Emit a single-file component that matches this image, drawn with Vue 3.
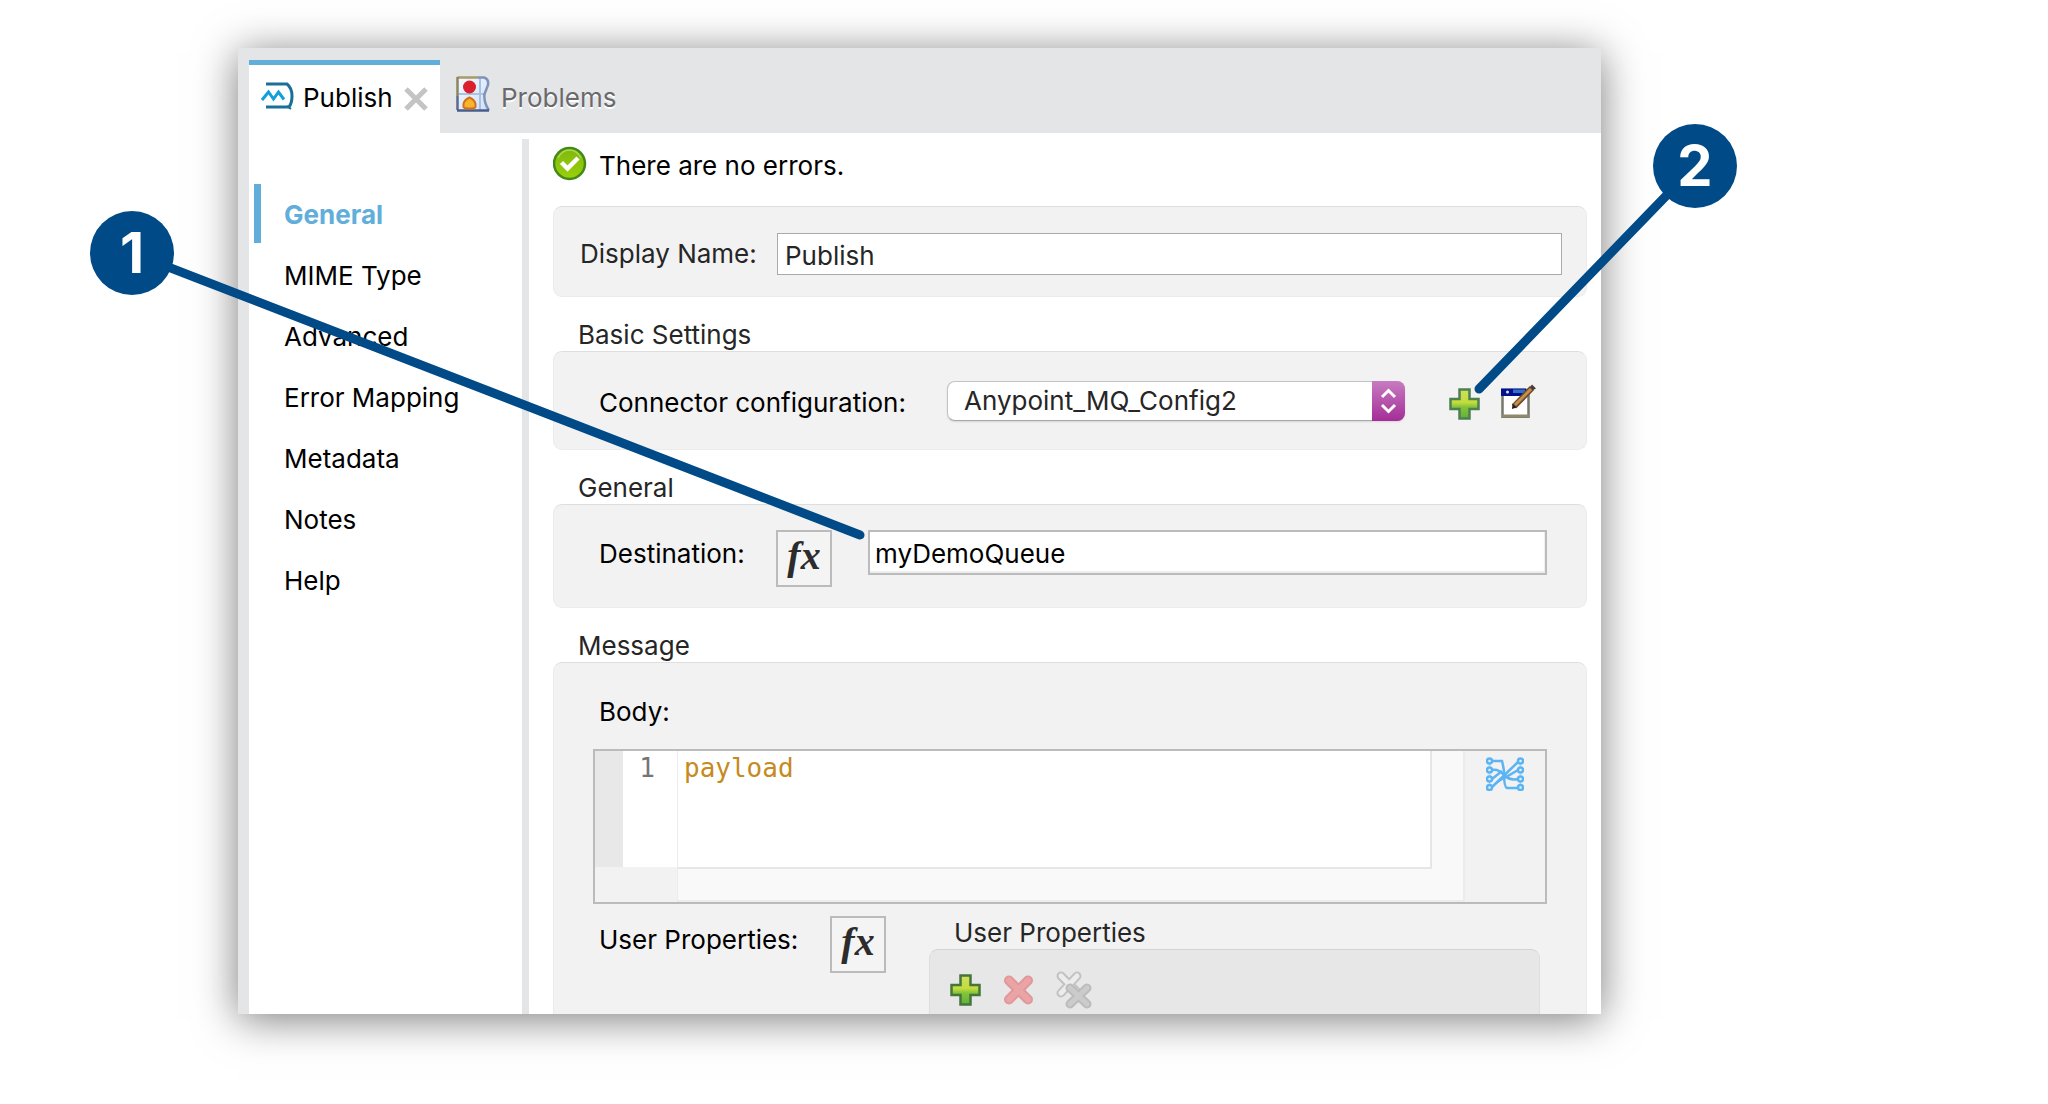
<script setup>
import { ref } from 'vue'

const navItems = ['General', 'MIME Type', 'Advanced', 'Error Mapping', 'Metadata', 'Notes', 'Help']
const activeItem = ref('General')
const displayName = ref('Publish')
const config = ref('Anypoint_MQ_Config2')
const destination = ref('myDemoQueue')
const body = ref('payload')
</script>

<template>
  <main class="page">
    <div class="window">
      <header class="tabs">
        <div class="tab tab-active">
          <svg class="tab-logo" viewBox="0 0 33 28" width="33" height="28" aria-hidden="true">
            <path d="M5 2H26Q31 6 31 14Q31 21 28 25H5" fill="none" stroke="#1a6f97" stroke-width="3" />
            <path d="M26 24L30 27" stroke="#1a6f97" stroke-width="2" />
            <path d="M1 18L7.500 10L12.500 17L17.500 10L23 17.500" fill="none" stroke="#12a0dc" stroke-width="3" />
          </svg>
          <span>Publish</span>
          <button class="icon-button" aria-label="Close tab">
            <svg viewBox="0 0 24 24" width="24" height="24"><path d="M2 2L22 22M22 2L2 22" stroke="#c4c4c4" stroke-width="5" /></svg>
          </button>
        </div>
        <div class="tab tab-idle">
          <svg viewBox="0 0 34 36" width="34" height="36" aria-hidden="true">
            <defs>
              <linearGradient id="sheet" x1="0" y1="0" x2="1" y2="1"><stop offset="0" stop-color="#f4f9ff" /><stop offset="1" stop-color="#cfe0f6" /></linearGradient>
            </defs>
            <path d="M1.500 1.500H29Q33 4 32 9L28 18Q28 26 33 34.500H1.500Z" fill="url(#sheet)" />
            <path d="M24 2V34M2 18H28" stroke="#a9c1e2" stroke-width="2" />
            <path d="M22 1.500H28Q33 3 32 9L28.500 18Q27.500 26 33 34.500" fill="none" stroke="#7f93b8" stroke-width="2.500" />
            <path d="M1.500 1.500H22" stroke="#a89a68" stroke-width="2.500" />
            <path d="M1.500 1V20" stroke="#8d8560" stroke-width="2.500" />
            <path d="M1.500 20V34" stroke="#5d688c" stroke-width="2.500" />
            <path d="M1 34.500H33" stroke="#4a5c8c" stroke-width="2.500" />
            <circle cx="13.500" cy="11" r="6.500" fill="#d9202c" />
            <path d="M7.500 31V28Q8 24 13.500 21.500Q19 24 19.500 28V31Q19 32.500 13.500 32.500Q8 32.500 7.500 31Z" fill="#f8b42a" stroke="#d2701c" stroke-width="2" />
          </svg>
          <span>Problems</span>
        </div>
      </header>

      <div class="body">
        <nav class="sidebar" aria-label="Sections">
          <ul>
            <li v-for="item in navItems" :key="item">
              <a href="#" :class="{ active: item === activeItem }" @click.prevent="activeItem = item">{{ item }}</a>
            </li>
          </ul>
        </nav>

        <form class="form" @submit.prevent>
          <p class="status">
            <svg viewBox="0 0 34 35" width="34" height="35" aria-hidden="true">
              <defs>
                <linearGradient id="ok" x1="0" y1="0" x2="0" y2="1"><stop offset="0" stop-color="#7fb80c" /><stop offset="1" stop-color="#9bd00c" /></linearGradient>
              </defs>
              <circle cx="16.500" cy="17.500" r="15.500" fill="url(#ok)" stroke="#438a14" stroke-width="2.500" />
              <path d="M5 12Q9 4 16.500 4Q24 4 28 12" fill="none" stroke="#a9d653" stroke-width="1.500" />
              <path d="M8.500 16.500L14.500 22.500L25 12" fill="none" stroke="#fff" stroke-width="4.500" />
            </svg>
            <span>There are no errors.</span>
          </p>

          <div class="panel panel-name">
            <label for="display-name">Display Name:</label>
            <input id="display-name" v-model="displayName" type="text" />
          </div>

          <h2>Basic Settings</h2>
          <div class="panel panel-basic">
            <label for="config">Connector configuration:</label>
            <div class="select">
              <select id="config" v-model="config">
                <option>Anypoint_MQ_Config2</option>
              </select>
              <svg viewBox="0 0 33 40" aria-hidden="true">
                <path d="M10 16L16.500 9.500L23 16M10 24L16.500 30.500L23 24" fill="none" stroke="#fff" stroke-width="3" />
              </svg>
            </div>
            <button class="icon-button add" aria-label="Add configuration">
              <svg viewBox="0 0 31 32" width="31" height="32">
                <defs>
                  <linearGradient id="plus" x1="0" y1="0" x2="0" y2="1"><stop offset="0" stop-color="#cfe05e" /><stop offset="0.450" stop-color="#c3dc3c" /><stop offset="0.600" stop-color="#84c43a" /><stop offset="1" stop-color="#62b03a" /></linearGradient>
                </defs>
                <path d="M10.500 1.500H20.500V11H29.500V21H20.500V30.500H10.500V21H1.500V11H10.500Z" fill="url(#plus)" stroke="#4c8050" stroke-width="2.500" />
              </svg>
            </button>
            <button class="icon-button" aria-label="Edit configuration">
              <svg viewBox="0 0 35 34" width="35" height="34">
                <rect x="1.500" y="6" width="26" height="27" fill="#fff" stroke="#77776c" stroke-width="2.500" />
                <path d="M1 32H28.500" stroke="#8f8a6c" stroke-width="3" />
                <path d="M0 4.500H25V12H0Z" fill="#06108a" />
                <path d="M12 5.500H24V9H12Z" fill="#2f72c8" />
                <circle cx="6.500" cy="8" r="1.500" fill="#cfe4ff" />
                <path d="M13 22.500L31 4" stroke="#6b4a2c" stroke-width="6" />
                <path d="M14 21L30 5" stroke="#c9904c" stroke-width="3" />
                <path d="M31 0.500L35 4.500L32 6L29 3Z" fill="#4a3a3a" />
                <path d="M11.500 19.500L15.500 23.500L11 25Z" fill="#2a1c18" />
              </svg>
            </button>
          </div>

          <h2>General</h2>
          <div class="panel panel-general">
            <label for="destination">Destination:</label>
            <button class="fx" aria-label="Destination expression">fx</button>
            <input id="destination" v-model="destination" type="text" />
          </div>

          <h2>Message</h2>
          <div class="panel panel-message">
            <label class="body-label" for="payload">Body:</label>
            <div class="editor">
              <div class="ruler"></div>
              <div class="line-number">1</div>
              <div class="code">
                <textarea id="payload" v-model="body" spellcheck="false"></textarea>
              </div>
              <div class="tools">
                <button class="icon-button" aria-label="Open mapping">
                  <svg viewBox="0 0 38 34" width="38" height="34" fill="none" stroke="#5db4f2" stroke-width="2.500">
                    <g stroke="#b4dcf8" stroke-width="2"><path d="M3.500 4V30M34.500 4V30" /></g>
                    <path d="M6 4H16Q18 12 18 16Q18 30 21 31H32" />
                    <path d="M6 13Q13 12 18 18Q24 24 32 22" />
                    <path d="M6 22L16 14M6 30L32 5M6 30Q14 22 20 20L32 13" />
                    <g fill="#e4f3fd"><circle cx="3.500" cy="4" r="2.500" /><circle cx="3.500" cy="13" r="2.500" /><circle cx="3.500" cy="22" r="2.500" /><circle cx="3.500" cy="30.500" r="2.500" /><circle cx="34.500" cy="4" r="2.500" /><circle cx="34.500" cy="13" r="2.500" /><circle cx="34.500" cy="22" r="2.500" /><circle cx="34.500" cy="30.500" r="2.500" /></g>
                  </svg>
                </button>
              </div>
            </div>

            <div class="user-row">
              <span class="user-label">User Properties:</span>
              <button class="fx" aria-label="User properties expression">fx</button>
              <section class="user-group">
                <h3>User Properties</h3>
                <div class="toolbar">
                  <button class="icon-button" aria-label="Add property">
                    <svg viewBox="0 0 31 32" width="31" height="32">
                      <path d="M10.500 1.500H20.500V11H29.500V21H20.500V30.500H10.500V21H1.500V11H10.500Z" fill="url(#plus)" stroke="#44763c" stroke-width="2.500" />
                    </svg>
                  </button>
                  <button class="icon-button" aria-label="Delete property">
                    <svg viewBox="0 0 31 32" width="31" height="32">
                      <path d="M6 6.500L25 25.500M25 6.500L6 25.500" stroke="#e0989a" stroke-width="10" stroke-linecap="round" />
                      <path d="M6 6.500L25 25.500M25 6.500L6 25.500" stroke="#eba4a6" stroke-width="6" stroke-linecap="round" />
                    </svg>
                  </button>
                  <button class="icon-button" aria-label="Delete all properties">
                    <svg viewBox="0 0 36 38" width="36" height="38" stroke-linecap="round">
                      <path d="M5 5L21 21M21 5L5 22" stroke="#c2c2c2" stroke-width="9" />
                      <path d="M5 5L21 21M21 5L5 22" stroke="#ececec" stroke-width="5" />
                      <path d="M14 17L31 33M31 17L14 33" stroke="#bcbcbc" stroke-width="9" />
                      <path d="M14 17L31 33M31 17L14 33" stroke="#cbcbcb" stroke-width="5" />
                    </svg>
                  </button>
                </div>
              </section>
            </div>
          </div>
        </form>
      </div>

      <div class="callout callout-one">
        <svg viewBox="0 0 780 330" width="780" height="330" aria-hidden="true"><path d="M42 42L770 324" /></svg>
        <span class="badge">1</span>
      </div>
      <div class="callout callout-two">
        <svg viewBox="0 0 270 280" width="270" height="280" aria-hidden="true"><path d="M228 42L12 265" /></svg>
        <span class="badge">2</span>
      </div>
    </div>
  </main>
</template>

<style>
body {
  margin: 0;
  background: #fff;
}
</style>

<style scoped>
.page {
  padding: 48px 447px 90px 238px;
  font-family: Inter, "Liberation Sans", sans-serif;
  font-size: 26px;
  line-height: 30px;
  color: #000;
}
.page *,
.page *::before {
  box-sizing: border-box;
}
.window {
  position: relative;
  background: #e4e5e7;
  box-shadow: 0 5px 40px rgba(0, 0, 0, 0.52);
}
.tabs {
  display: flex;
  padding: 12px 11px 0;
}
.tab {
  display: flex;
  align-items: center;
  height: 73px;
}
.tab span {
  padding-bottom: 2px;
}
.tab-active {
  gap: 9px;
  padding: 0 12px;
  width: 191px;
  border-top: 5px solid #62aedb;
  background: #fff;
}
.tab-logo {
  margin-bottom: 6px;
}
.tab-active .icon-button {
  margin-left: auto;
}
.tab-idle {
  gap: 11px;
  padding: 0 16px;
  border-top: 5px solid transparent;
  color: #6a6a6c;
  text-shadow: 0 2px 0 #fff;
}
.tab-idle svg {
  margin-bottom: 10px;
}
.icon-button {
  display: block;
  flex: none;
  padding: 0;
  border: 0;
  background: none;
}
.icon-button svg {
  display: block;
}
.body {
  display: flex;
  margin-left: 11px;
  background: #fff;
}
.sidebar {
  flex: none;
  width: 280px;
  margin-top: 6px;
  padding: 45px 0 0 5px;
  border-right: 7px solid #e4e5e7;
}
.sidebar ul {
  display: flex;
  flex-direction: column;
  gap: 2px;
  margin: 0;
  padding: 0;
  list-style: none;
}
.sidebar a {
  display: flex;
  align-items: center;
  height: 59px;
  padding: 3px 0 0 23px;
  border-left: 7px solid transparent;
  color: inherit;
  text-decoration: none;
}
.sidebar a.active {
  border-color: #62aedb;
  color: #62aedb;
  font-weight: 700;
}
.form {
  flex: 1;
  min-width: 0;
  padding: 13px 14px 0 24px;
}
.status {
  display: flex;
  align-items: center;
  gap: 12px;
  height: 35px;
  margin: 0 0 25px;
}
.status span {
  padding-top: 4px;
}
h2,
h3 {
  margin: 23px 0 1px 25px;
  font-size: 26px;
  font-weight: 400;
  line-height: 30px;
  color: #262626;
}
h3 {
  margin-top: 2px;
}
.panel {
  display: flex;
  border: 1px solid #ebebeb;
  border-top-color: #dedede;
  border-radius: 9px;
  background: #f2f2f2;
}
input,
select,
textarea {
  min-width: 0;
  font: inherit;
  border-radius: 0;
  outline: 0;
}
input {
  flex: 1;
  background: #fff;
}
.panel-name {
  align-items: center;
  padding: 26px 24px 21px 26px;
  color: #262626;
}
.panel-name label {
  width: 197px;
}
.panel-name input {
  height: 42px;
  padding: 2px 7px 0;
  border: 1px solid #aaa;
  color: inherit;
}
.panel-basic {
  align-items: center;
  padding: 29px 50px 28px 45px;
}
.panel-basic label {
  width: 348px;
  padding-top: 4px;
}
.select {
  position: relative;
  flex: 1;
  height: 40px;
}
.select select {
  width: 100%;
  height: 40px;
  padding: 0 40px 0 16px;
  border: 1px solid #c4c4c4;
  border-bottom-color: #a8a8a8;
  border-radius: 8px;
  background: #fff;
  box-shadow: 0 1px 2px rgba(0, 0, 0, 0.12);
  appearance: none;
  color: #262626;
}
.select svg {
  position: absolute;
  top: 0;
  right: 0;
  width: 33px;
  height: 40px;
  border-radius: 0 8px 8px 0;
  background: linear-gradient(#c77cc0, #a42d98);
  pointer-events: none;
}
.add {
  margin: 6px 21px 0 44px;
}
.panel-general {
  align-items: flex-start;
  padding: 25px 39px 20px 45px;
}
.panel-general label {
  width: 177px;
  line-height: 48px;
}
.panel-general input {
  height: 45px;
  margin-left: 36px;
  padding: 2px 5px 0;
  border: 2px solid #bbb;
  box-shadow: inset -1px -2px 1px #eee;
}
.fx {
  flex: none;
  width: 56px;
  height: 57px;
  padding: 0 0 6px;
  border: 2px solid #bbb;
  background: #f4f4f4;
  color: #2c2c2c;
  font: italic 700 40px/40px "Liberation Serif", serif;
}
.panel-message {
  flex-direction: column;
  padding: 34px 39px 0;
  border-bottom: 0;
  border-radius: 9px 9px 0 0;
}
.body-label {
  margin: 0 0 22px 6px;
}
.editor {
  display: grid;
  grid-template-columns: 28px 54px 1fr 80px;
  grid-template-rows: 116px 35px;
  border: 2px solid #bbb;
}
.ruler {
  background: #e8e8e8;
}
.line-number {
  padding-right: 22px;
  background: #fff;
  color: #757575;
  font: 26px/34px "DejaVu Sans Mono", monospace;
  text-align: right;
}
.code {
  grid-row: 1 / 3;
  grid-column: 3;
  padding: 0 31px 31px 0;
  border: solid #ececec;
  border-width: 0 2px 2px 1px;
  background: #f9f9f9;
}
.code textarea {
  display: block;
  width: 100%;
  height: 118px;
  padding: 0 6px;
  border: solid #e6e6e6;
  border-width: 0 2px 2px 0;
  background: #fff;
  color: #c68a22;
  font: 26px/34px "DejaVu Sans Mono", monospace;
  resize: none;
}
.tools {
  grid-row: 1 / 3;
  grid-column: 4;
  padding: 6px 0 0 21px;
}
.user-row {
  display: flex;
  align-items: flex-start;
  padding: 12px 7px 0 6px;
}
.user-label {
  width: 231px;
  line-height: 48px;
}
.user-group {
  flex: 1;
  margin-left: 43px;
}
.toolbar {
  display: flex;
  align-items: center;
  gap: 22px;
  height: 65px;
  padding: 15px 20px 0;
  border: 1px solid #dedede;
  border-top-color: #d2d2d2;
  border-bottom: 0;
  border-radius: 9px 9px 0 0;
  background: #e7e7e7;
}
.callout {
  position: absolute;
  pointer-events: none;
}
.callout svg {
  display: block;
  fill: none;
  stroke: #004b87;
  stroke-width: 9;
  stroke-linecap: round;
}
.callout-one {
  top: 163px;
  left: -148px;
}
.callout-two {
  top: 76px;
  right: -136px;
}
.badge {
  position: absolute;
  top: 0;
  width: 84px;
  height: 84px;
  border-radius: 50%;
  background: #004b87;
  color: #fff;
  font: 700 56px/84px Inter, sans-serif;
  text-align: center;
}
.callout-one .badge {
  left: 0;
}
.callout-two .badge {
  right: 0;
}
</style>
